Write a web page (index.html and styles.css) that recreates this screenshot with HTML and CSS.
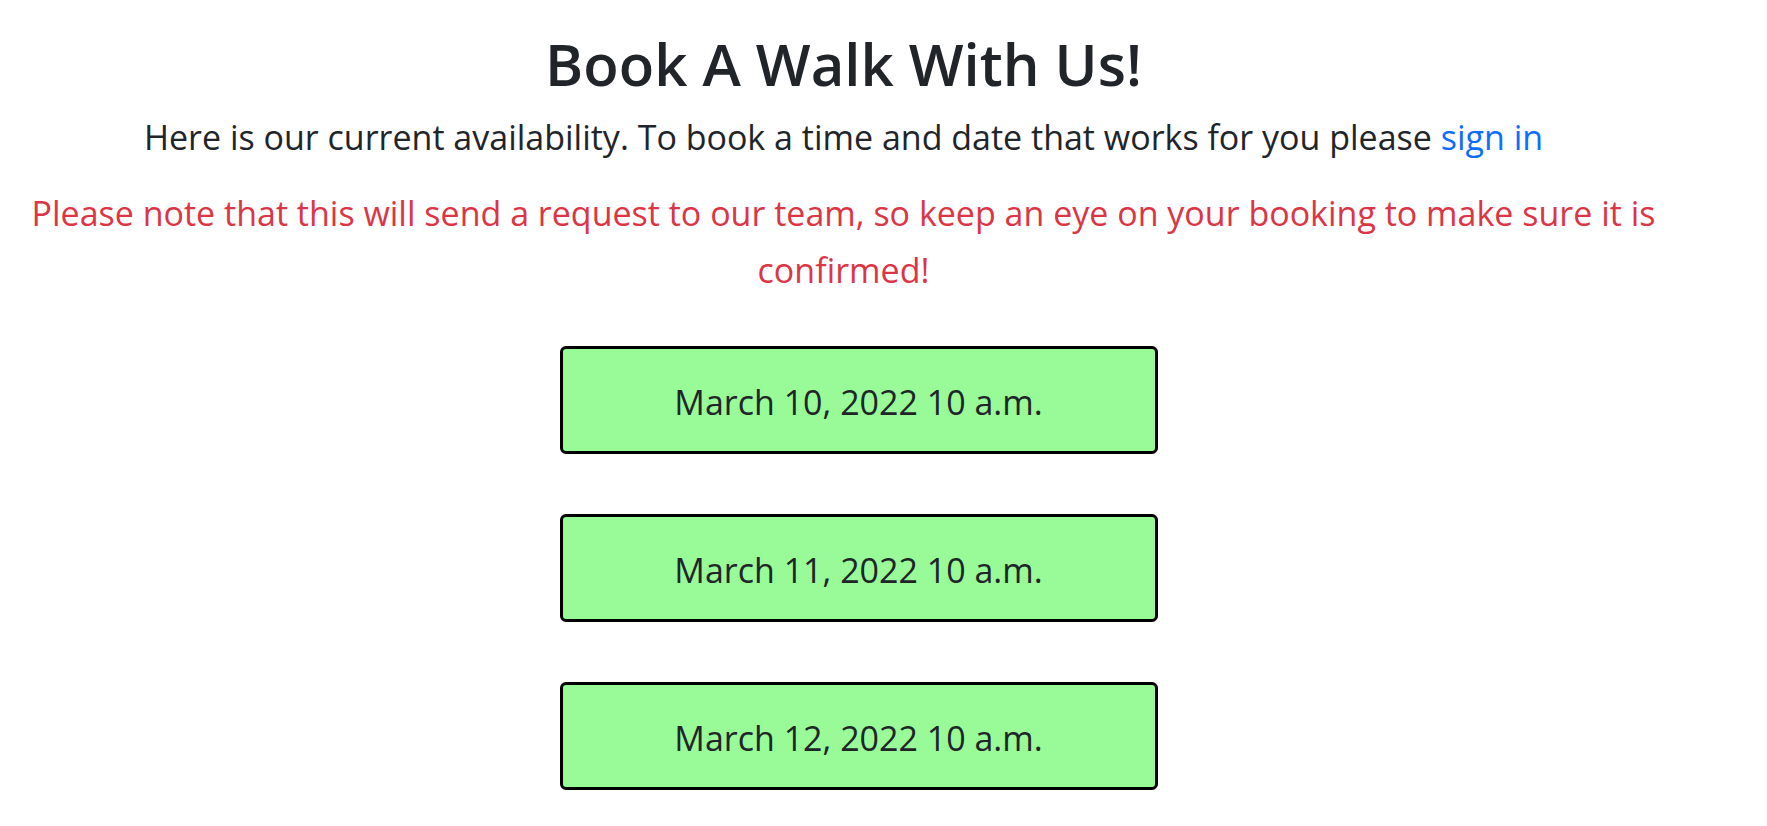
FILE: index.html
```html
<!DOCTYPE html>
<html lang="en">
<head>
<meta charset="utf-8">
<title>Book A Walk With Us!</title>
<link rel="stylesheet" href="styles.css">
</head>
<body>
<main class="page">
  <header class="intro">
    <h1 class="title">Book A Walk With Us!</h1>
    <p class="lead">Here is our current availability. To book a time and date that works for you please <a class="link" href="#">sign in</a></p>
    <p class="note">Please note that this will send a request to our team, so keep an eye on your booking to make sure it is confirmed!</p>
  </header>
  <section class="slots">
    <button class="slot" type="button">March 10, 2022 10 a.m.</button>
    <button class="slot" type="button">March 11, 2022 10 a.m.</button>
    <button class="slot" type="button">March 12, 2022 10 a.m.</button>
  </section>
</main>
</body>
</html>
```
FILE: styles.css
```css
* { box-sizing: border-box; }
html, body { margin: 0; padding: 0; background: #fff; }
body {
  font-family: "Open Sans", "Noto Sans", "Liberation Sans", sans-serif;
  color: #212529;
}
.page { width: 1767px; }
.intro {
  width: 1687px;
  text-align: center;
  padding: 0 20px;
}
.title {
  margin: 29px 0 0;
  font-size: 58px;
  font-weight: 600;
  line-height: 1.2;
}
.lead {
  margin: 13px 0 0;
  font-size: 34px;
  line-height: 1.5;
}
.link { color: #0d6efd; text-decoration: none; }
.note {
  margin: 22px 0 0;
  font-size: 34px;
  line-height: 57px;
  color: #dc3545;
}
.slots {
  width: 1717px;
  display: flex;
  flex-direction: column;
  align-items: center;
  gap: 60px;
  margin-top: 47px;
}
.slot {
  width: 598px;
  height: 108px;
  background: #98fb98;
  border: 3px solid #000;
  border-radius: 6px;
  font-family: inherit;
  font-size: 34px;
  color: #212529;
  padding: 5px 0 0;
}
```
